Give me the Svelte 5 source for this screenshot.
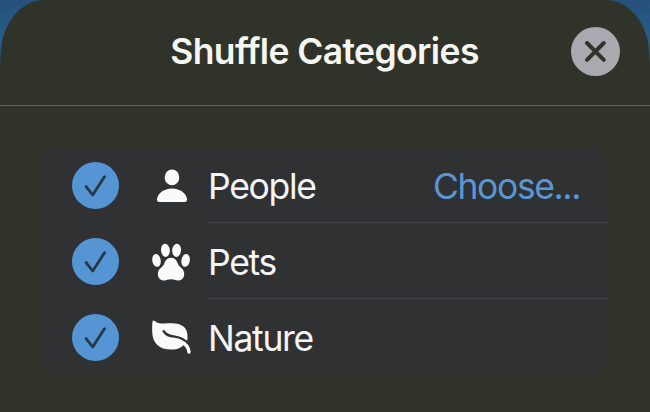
<script>
  const categories = [
    { name: 'People', icon: 'person', action: 'Choose...' },
    { name: 'Pets', icon: 'paw' },
    { name: 'Nature', icon: 'leaf' },
  ];
  let checked = $state([true, true, true]);
</script>

<div class="backdrop">
  <section class="sheet">
    <header>
      <h1>Shuffle Categories</h1>
      <button class="close" aria-label="Close">
        <svg width="49" height="49" viewBox="0 0 49 49">
          <path d="M16 16 32.8 32.8M32.8 16 16 32.8" stroke="#303329" stroke-width="4" stroke-linecap="round" />
        </svg>
      </button>
    </header>

    <ul>
      {#each categories as category, i}
        <li>
          <button class="check" aria-label={category.name} aria-pressed={checked[i]} onclick={() => (checked[i] = !checked[i])}>
            {#if checked[i]}
              <svg width="47" height="47" viewBox="0 0 47 47">
                <path d="M14.1 24.6 20.7 33 32.6 14.6" fill="none" stroke="#263747" stroke-width="2.8" stroke-linecap="round" stroke-linejoin="round" />
              </svg>
            {/if}
          </button>
          <svg class="icon" width="40" height="40" viewBox="0 0 40 40" fill="#fafafa">
            {#if category.icon === 'person'}
              <ellipse cx="20" cy="11.4" rx="7.3" ry="7.9" />
              <path d="M7.3 36C5.6 36 4.9 34.9 5 33.3 5.5 27.8 11.6 22.5 20 22.5S34.5 27.8 35 33.3C35.1 34.9 34.4 36 32.7 36Z" />
            {:else if category.icon === 'paw'}
              <g transform="translate(-.6)">
                <ellipse cx="5.1" cy="18.4" rx="4.2" ry="6.5" transform="rotate(-10 5.1 18.4)" />
                <ellipse cx="14" cy="8.3" rx="4.4" ry="6.6" transform="rotate(-4 14 8.3)" />
                <ellipse cx="25.2" cy="8.3" rx="4.4" ry="6.6" transform="rotate(4 25.2 8.3)" />
                <ellipse cx="34.2" cy="18.4" rx="4.2" ry="6.5" transform="rotate(10 34.2 18.4)" />
                <path d="M19.6 15.8C15.3 15.8 13.8 19 12.7 22C11.3 25.5 6.5 26.3 6.5 32C6.500 36 9 38.500 12.500 38.500C15.300 38.500 16.500 37.300 19.600 37.300S23.900 38.500 26.700 38.500C30.300 38.500 32.800 36 32.800 32C32.800 26.300 28 25.500 26.600 22C25.400 19 23.900 15.800 19.600 15.800Z" />
              </g>
            {:else}
              <path d="M.5 3.500C.8 2 2 2.200 3 3.200C7.500 7 15 5 22.500 5.400C31.500 5.800 36 11 35.500 19.500L35.200 24L30 28.500C27 31 23 31.600 19 31.600C7.500 31.600 .5 25 .2 14C.1 10 .1 6 .5 3.500Z" />
              <path d="M11.600 13.200C14.200 17.500 18 18.100 22.800 18.600C29.500 19.300 33.500 22 38 27" fill="none" stroke="#303133" stroke-width="2.400" stroke-linecap="round" />
              <path d="M28 23.500C33 25.200 36.500 29 37 34" fill="none" stroke="#fafafa" stroke-width="3.400" stroke-linecap="round" />
            {/if}
          </svg>
          <div class="content">
            <span>{category.name}</span>
            {#if category.action}<button class="action">{category.action}</button>{/if}
          </div>
        </li>
      {/each}
    </ul>
  </section>
</div>

<style>
  :global(body) {
    margin: 0;
    font-family: Inter, 'Liberation Sans', sans-serif;
  }
  button {
    margin: 0;
    padding: 0;
    border: 0;
    font: inherit;
    letter-spacing: inherit;
  }
  svg {
    display: block;
  }
  .backdrop {
    height: 412px;
    overflow: hidden;
    background: linear-gradient(#27507b, #25608b 45px, #303329 66px);
  }
  .sheet {
    box-sizing: border-box;
    height: 412px;
    margin: 0 1px;
    background: #303329;
    border-radius: 44px 44px 0 0 / 54px 54px 0 0;
  }
  header {
    box-sizing: border-box;
    display: grid;
    grid-template-columns: 80px 1fr 79px;
    align-items: center;
    height: 106px;
    margin: 0 -1px;
    padding-bottom: 2px;
    border-bottom: 1px solid #62645c;
  }
  h1 {
    grid-column: 2;
    margin: 0 2px 0 0;
    text-align: center;
    white-space: nowrap;
    font-size: 35.5px;
    line-height: 44px;
    font-weight: 600;
    letter-spacing: -0.62px;
    color: #f5f6f2;
  }
  .close {
    width: 49px;
    height: 49px;
    border-radius: 50%;
    background: #a9a9af;
  }
  ul {
    margin: 41px 42px 0 41px;
    padding: 0 0 1px;
    list-style: none;
    border-radius: 18px;
    background: #303133;
  }
  li {
    display: flex;
    align-items: center;
    height: 76px;
    padding-left: 30px;
  }
  .check {
    width: 47px;
    height: 47px;
    border-radius: 50%;
    background: #5595d3;
  }
  .icon {
    margin: 2px 16px 0 33px;
  }
  .content {
    box-sizing: border-box;
    flex: 1;
    display: flex;
    align-items: center;
    justify-content: space-between;
    height: 76px;
    padding: 3px 27px 0 0;
    font-size: 35.5px;
    letter-spacing: -1.3px;
    color: #f5f5f7;
    border-bottom: 1px solid #434447;
  }
  li:last-child .content {
    border-bottom-color: transparent;
  }
  .action {
    background: none;
    color: #5897d6;
    letter-spacing: -1.4px;
  }
</style>
